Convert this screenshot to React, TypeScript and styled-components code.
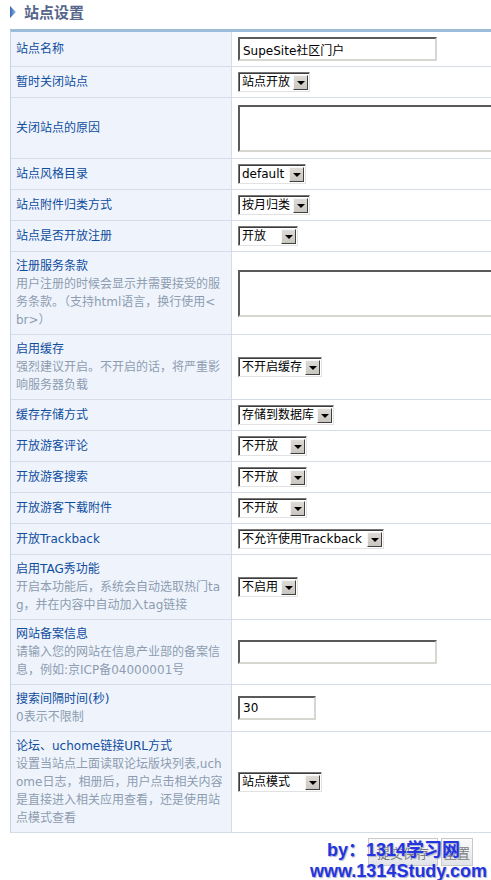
import React from 'react'
import styled, { createGlobalStyle } from 'styled-components'

const GlobalStyle = createGlobalStyle`
  html, body {
    margin: 0;
    padding: 0;
    overflow-x: hidden;
    background: #fff;
  }
  body {
    font-family: "DejaVu Sans", "Noto Sans CJK SC", sans-serif;
    font-size: 12px;
    line-height: 18px;
    color: #222;
  }
`

const Page = styled.div`
  position: relative;
  width: 540px;
  padding-left: 10px;
  padding-bottom: 14px;
`

const TitleBar = styled.div`
  display: flex;
  align-items: center;
  height: 29px;
  gap: 8px;
  padding-bottom: 6px;
  box-sizing: border-box;
`

const TitleText = styled.h2`
  margin: 0;
  font-size: 15px;
  line-height: 20px;
  font-weight: bold;
  color: #56668a;
  font-family: "Noto Sans CJK SC", sans-serif;
`

const Table = styled.table`
  width: 530px;
  table-layout: fixed;
  border-collapse: separate;
  border-spacing: 0;
  border-top: 3px solid #9bbdda;
  border-left: 1px solid #c6d3e4;
`

const LabelCell = styled.td`
  width: 210px;
  padding: 5px;
  background: #eff4fc;
  border-bottom: 1px solid #d6dde8;
  border-right: 1px solid #d6dde8;
  vertical-align: middle;
  white-space: nowrap;
`

const FieldCell = styled.td`
  padding: 5px 6px;
  background: #fff;
  border-bottom: 1px solid #d6dde8;
  vertical-align: middle;
`

const Label = styled.div`
  color: #0f4d9e;
`

const Desc = styled.div`
  color: #8d9cb0;
`

const TextInput = styled.input<{ $w: number }>`
  width: ${(p) => p.$w}px;
  height: 24px;
  box-sizing: border-box;
  margin: 0;
  padding: 1px 3px;
  border: 2px solid;
  border-color: #5a5a5a #d8d6d0 #d8d6d0 #5a5a5a;
  font-family: "DejaVu Sans", "Noto Sans CJK SC", sans-serif;
  font-size: 12px;
  color: #000;
  background: #fff;
  vertical-align: middle;
  outline: none;
`

const TextArea = styled.textarea`
  display: block;
  width: 270px;
  height: 47px;
  box-sizing: border-box;
  margin: 2px 0 1px;
  padding: 2px;
  border: 2px solid;
  border-color: #5a5a5a #d8d6d0 #d8d6d0 #5a5a5a;
  resize: none;
  font-family: "DejaVu Sans", "Noto Sans CJK SC", sans-serif;
  font-size: 12px;
  outline: none;
`

const SelectBox = styled.span<{ $w: number }>`
  display: inline-flex;
  align-items: center;
  justify-content: space-between;
  width: ${(p) => p.$w}px;
  height: 20px;
  box-sizing: border-box;
  padding: 0 1px 0 3px;
  border: 1px solid;
  border-color: #777 #e2e2e2 #e2e2e2 #777;
  box-shadow: inset 1px 1px 0 #3c3c3c;
  background: #fff;
  color: #000;
  vertical-align: middle;
  line-height: 18px;
`

const SelectValue = styled.span`
  white-space: nowrap;
`

const SelectArrow = styled.span`
  display: flex;
  align-items: center;
  justify-content: center;
  width: 15px;
  height: 15px;
  box-sizing: border-box;
  margin-top: 1px;
  background: linear-gradient(#dedbd6, #c9c6c0);
  border: 1px solid;
  border-color: #f6f6f6 #404040 #404040 #f6f6f6;
  &::after {
    content: '';
    border-left: 4px solid transparent;
    border-right: 4px solid transparent;
    border-top: 4px solid #000;
  }
`

const Footer = styled.div`
  position: relative;
  display: flex;
  gap: 3px;
  padding: 5px 0 0 358px;
`

const Button = styled.button<{ $w: number }>`
  width: ${(p) => p.$w}px;
  height: 28px;
  padding: 0;
  border: 1px solid #c9c9c9;
  background: linear-gradient(#fbfbfb, #e2e4e8);
  color: #7a7a7a;
  font-family: "Noto Sans CJK SC", sans-serif;
  font-size: 13px;
`

const Watermark = styled.div`
  position: absolute;
  left: 300px;
  top: 7px;
  font-family: "Liberation Sans", "Noto Sans CJK SC", sans-serif;
  font-weight: bold;
  font-size: 18px;
  line-height: 21px;
  color: #2435e0;
  text-shadow: 1px 1px 1px #a8b0c8;
  pointer-events: none;
`

const WatermarkLine = styled.div<{ $indent: number }>`
  padding-left: ${(p) => p.$indent}px;
  white-space: nowrap;
`

const Select = ({ value, width }: { value: string; width: number }) => (
  <SelectBox $w={width}>
    <SelectValue>{value}</SelectValue>
    <SelectArrow />
  </SelectBox>
)

type Row = { label: string; desc?: string[]; field: React.ReactNode }

const rows: Row[] = [
  { label: '站点名称', field: <TextInput $w={199} defaultValue="SupeSite社区门户" /> },
  { label: '暂时关闭站点', field: <Select value="站点开放" width={72} /> },
  { label: '关闭站点的原因', field: <TextArea /> },
  { label: '站点风格目录', field: <Select value="default" width={68} /> },
  { label: '站点附件归类方式', field: <Select value="按月归类" width={72} /> },
  { label: '站点是否开放注册', field: <Select value="开放" width={60} /> },
  {
    label: '注册服务条款',
    desc: ['用户注册的时候会显示并需要接受的服', '务条款。（支持html语言，换行使用<', 'br>）'],
    field: <TextArea />,
  },
  {
    label: '启用缓存',
    desc: ['强烈建议开启。不开启的话，将严重影', '响服务器负载'],
    field: <Select value="不开启缓存" width={84} />,
  },
  { label: '缓存存储方式', field: <Select value="存储到数据库" width={96} /> },
  { label: '开放游客评论', field: <Select value="不开放" width={69} /> },
  { label: '开放游客搜索', field: <Select value="不开放" width={69} /> },
  { label: '开放游客下载附件', field: <Select value="不开放" width={69} /> },
  { label: '开放Trackback', field: <Select value="不允许使用Trackback" width={146} /> },
  {
    label: '启用TAG秀功能',
    desc: ['开启本功能后，系统会自动选取热门ta', 'g，并在内容中自动加入tag链接'],
    field: <Select value="不启用" width={60} />,
  },
  {
    label: '网站备案信息',
    desc: ['请输入您的网站在信息产业部的备案信', '息，例如:京ICP备04000001号'],
    field: <TextInput $w={199} />,
  },
  {
    label: '搜索间隔时间(秒)',
    desc: ['0表示不限制'],
    field: <TextInput $w={78} defaultValue="30" />,
  },
  {
    label: '论坛、uchome链接URL方式',
    desc: [
      '设置当站点上面读取论坛版块列表,uch',
      'ome日志，相册后，用户点击相关内容',
      '是直接进入相关应用查看，还是使用站',
      '点模式查看',
    ],
    field: <Select value="站点模式" width={84} />,
  },
]

const App: React.FC = () => {
  return (
    <Page>
      <GlobalStyle />
      <TitleBar>
        <svg width="6" height="12" viewBox="0 0 6 12">
          <defs>
            <linearGradient id="tri" x1="0" y1="0" x2="1" y2="0">
              <stop offset="0" stopColor="#3566b4" />
              <stop offset="1" stopColor="#9cc0e6" />
            </linearGradient>
          </defs>
          <path d="M0 0 L6 6 L0 12 Z" fill="url(#tri)" />
        </svg>
        <TitleText>站点设置</TitleText>
      </TitleBar>
      <Table>
        <tbody>
          {rows.map((row) => (
            <tr key={row.label}>
              <LabelCell>
                <Label>{row.label}</Label>
                {row.desc && row.desc.map((line) => <Desc key={line}>{line}</Desc>)}
              </LabelCell>
              <FieldCell>{row.field}</FieldCell>
            </tr>
          ))}
        </tbody>
      </Table>
      <Footer>
        <Button $w={70}>提交保存</Button>
        <Button $w={32}>重置</Button>
        <Watermark>
          <WatermarkLine $indent={17}>by：1314学习网</WatermarkLine>
          <WatermarkLine $indent={0}>www.1314Study.com</WatermarkLine>
        </Watermark>
      </Footer>
    </Page>
  )
}

export default App
